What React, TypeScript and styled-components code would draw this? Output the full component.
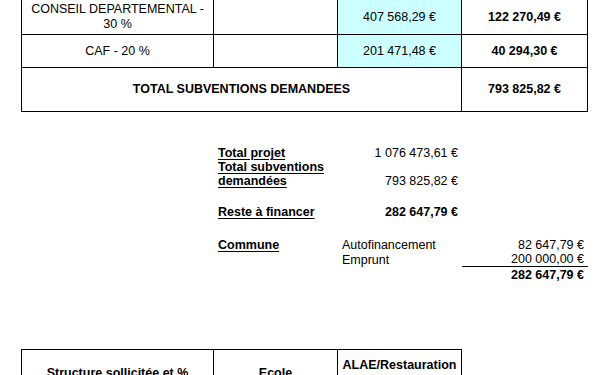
import styled, { createGlobalStyle } from 'styled-components';

const GlobalStyle = createGlobalStyle`
  html, body {
    margin: 0;
    padding: 0;
    overflow: hidden;
    background: #ffffff;
  }
  body {
    font-family: 'Liberation Sans', Arial, sans-serif;
    font-size: 12.5px;
    color: #000;
  }
`;

const COLS = '192px 124px 124px 126px';

export default function App() {
  return (
    <>
      <GlobalStyle />
      <Page>
        <Sheet $cols={COLS} style={{ marginTop: -1 }}>
          <Cell $h={35}>CONSEIL DEPARTEMENTAL -<br />30 %</Cell>
          <Cell $h={35} />
          <Cell $h={35} $fill>407 568,29 €</Cell>
          <Cell $h={35} $bold>122 270,49 €</Cell>

          <Cell $h={33}>CAF - 20 %</Cell>
          <Cell $h={33} />
          <Cell $h={33} $fill>201 471,48 €</Cell>
          <Cell $h={33} $bold>40 294,30 €</Cell>

          <Cell $h={44} $span={3} $bold>TOTAL SUBVENTIONS DEMANDEES</Cell>
          <Cell $h={44} $bold>793 825,82 €</Cell>
        </Sheet>

        <Summary>
          <Label style={{ gridColumn: 2, gridRow: 1 }}>Total projet</Label>
          <Amount style={{ gridColumn: 3, gridRow: 1 }}>1 076 473,61 €</Amount>

          <Label style={{ gridColumn: 2, gridRow: '2 / 4' }}>Total subventions demandées</Label>
          <Amount style={{ gridColumn: 3, gridRow: 3 }}>793 825,82 €</Amount>

          <Label style={{ gridColumn: 2, gridRow: 5 }}>Reste à financer</Label>
          <Amount $bold style={{ gridColumn: 3, gridRow: 5 }}>282 647,79 €</Amount>

          <Label style={{ gridColumn: 2, gridRow: 7 }}>Commune</Label>
          <Text style={{ gridColumn: 3, gridRow: 7 }}>Autofinancement</Text>
          <Amount style={{ gridColumn: 4, gridRow: 7 }}>82 647,79 €</Amount>

          <Text style={{ gridColumn: 3, gridRow: 8 }}>Emprunt</Text>
          <Amount $rule style={{ gridColumn: 4, gridRow: 8 }}>200 000,00 €</Amount>

          <Amount $bold style={{ gridColumn: 4, gridRow: 9 }}>282 647,79 €</Amount>
        </Summary>

        <Sheet $cols="192px 124px 124px" style={{ marginTop: 66 }}>
          <Cell $h={47} $bold>Structure sollicitée et %</Cell>
          <Cell $h={47} $bold>Ecole</Cell>
          <Cell $h={47} $bold>ALAE/Restauration<br />scolaire</Cell>
        </Sheet>
      </Page>
    </>
  );
}

const Page = styled.div`
  padding-left: 21px;
  display: flex;
  flex-direction: column;
  align-items: flex-start;
`;

const Sheet = styled.div<{ $cols: string }>`
  display: grid;
  grid-template-columns: ${(p) => p.$cols};
  border-left: 1px solid #000;
  border-top: 1px solid #000;
`;

const Cell = styled.div<{ $h: number; $span?: number; $fill?: boolean; $bold?: boolean }>`
  box-sizing: border-box;
  height: ${(p) => p.$h}px;
  grid-column: span ${(p) => p.$span ?? 1};
  border-right: 1px solid #000;
  border-bottom: 1px solid #000;
  background: ${(p) => (p.$fill ? '#ccffff' : '#fff')};
  font-weight: ${(p) => (p.$bold ? 700 : 400)};
  line-height: 15px;
  display: flex;
  align-items: center;
  justify-content: center;
  text-align: center;
  padding: 0 4px;
`;

const Summary = styled.div`
  margin-top: 34px;
  padding-left: 1px;
  display: grid;
  grid-template-columns: ${COLS};
  grid-template-rows: 14px 14px 14px 17px 14px 18px 15px 15px 16px;
  line-height: 14px;
`;

const Label = styled.div`
  padding-left: 4px;
  font-weight: 700;
  text-decoration: underline;
  text-decoration-thickness: 1px;
  text-underline-offset: 2px;
  align-self: center;
`;

const Text = styled.div`
  padding-left: 4px;
  align-self: center;
`;

const Amount = styled.div<{ $bold?: boolean; $rule?: boolean }>`
  box-sizing: border-box;
  padding-right: 4px;
  text-align: right;
  font-weight: ${(p) => (p.$bold ? 700 : 400)};
  border-bottom: ${(p) => (p.$rule ? '1px solid #000' : 'none')};
  display: flex;
  align-items: center;
  justify-content: flex-end;
`;
